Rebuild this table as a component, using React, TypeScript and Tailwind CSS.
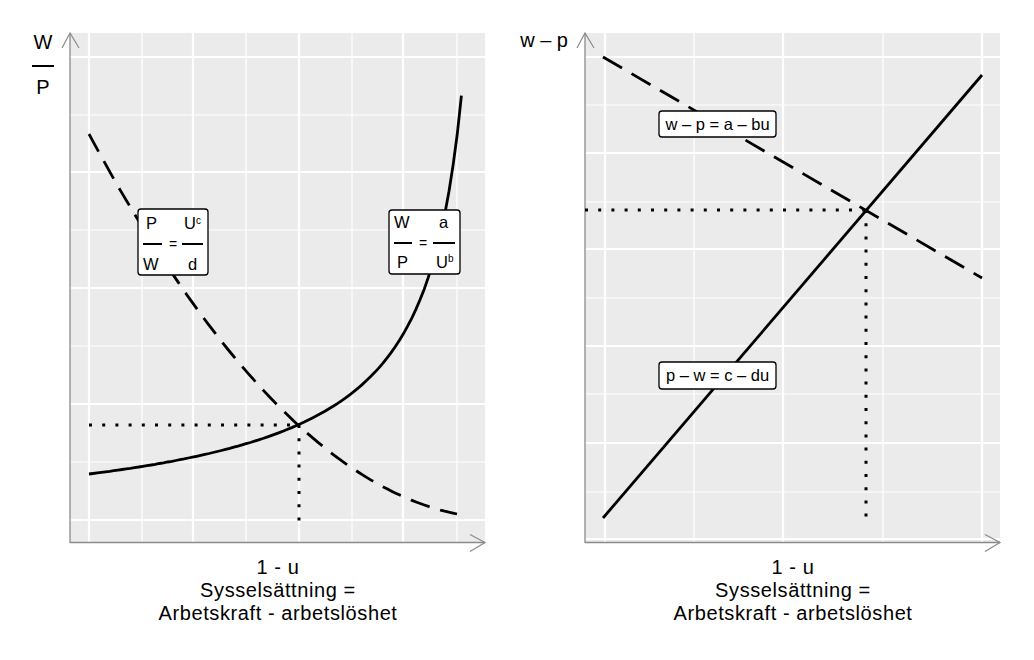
const FONT = "'Liberation Sans', Arial, sans-serif";

type GridProps = {
  x0: number;
  x1: number;
  y0: number;
  y1: number;
  vMajor: number[];
  vMinor: number[];
  hMajor: number[];
  hMinor: number[];
};

// ggplot-style panel: grey background with white major/minor grid lines
function Panel({ x0, x1, y0, y1, vMajor, vMinor, hMajor, hMinor }: GridProps) {
  return (
    <g>
      <rect x={x0} y={y0} width={x1 - x0} height={y1 - y0} fill="#EBEBEB" />
      {hMinor.map((y) => (
        <line key={'hm' + y} x1={x0} x2={x1} y1={y} y2={y} stroke="#fff" strokeWidth="1.2" />
      ))}
      {vMinor.map((x) => (
        <line key={'vm' + x} x1={x} x2={x} y1={y0} y2={y1} stroke="#fff" strokeWidth="1.2" />
      ))}
      {hMajor.map((y) => (
        <line key={'hM' + y} x1={x0} x2={x1} y1={y} y2={y} stroke="#fff" strokeWidth="2.2" />
      ))}
      {vMajor.map((x) => (
        <line key={'vM' + x} x1={x} x2={x} y1={y0} y2={y1} stroke="#fff" strokeWidth="2.2" />
      ))}
      {/* axes with open arrow heads */}
      <line x1={x0} x2={x0} y1={y0} y2={y1} stroke="#8a8a8a" strokeWidth="1.3" />
      <line x1={x0} x2={x1} y1={y1 - 0.5} y2={y1 - 0.5} stroke="#8a8a8a" strokeWidth="1.3" />
      <polyline
        points={`${x0 - 8},${y0 + 15} ${x0},${y0} ${x0 + 9},${y0 + 15}`}
        fill="none"
        stroke="#8a8a8a"
        strokeWidth="1.2"
      />
      <polyline
        points={`${x1 - 15},${y1 - 8.5} ${x1},${y1 - 0.5} ${x1 - 15},${y1 + 8.5}`}
        fill="none"
        stroke="#8a8a8a"
        strokeWidth="1.2"
      />
    </g>
  );
}

function buildPath(n: number, f: (i: number) => [number, number]) {
  const pts: string[] = [];
  for (let i = 0; i <= n; i++) {
    const [x, y] = f(i / n);
    pts.push(`${x.toFixed(1)},${y.toFixed(1)}`);
  }
  return 'M ' + pts.join(' L ');
}

// W/P = a / U^b  (rising)
const solidPath = buildPath(90, (s) => {
  const t = s * 1.012;
  const h = 69 * Math.pow(1.1 / (1.1 - t), 0.74);
  return [89 + t * 368, 543 - h];
});

// P/W = U^c / d  (falling)
const dashedPath = buildPath(90, (t) => {
  const h = 409 - 686 * t + 306 * t * t;
  return [89 + t * 368, 543 - h];
});

function LeftChart() {
  return (
    <svg width="517" height="556" viewBox="0 0 517 556" xmlns="http://www.w3.org/2000/svg">
      <Panel
        x0={70}
        x1={485}
        y0={33}
        y1={543}
        vMajor={[89, 193, 299, 403]}
        vMinor={[142, 246, 352, 457]}
        hMajor={[57, 172, 288, 404, 520]}
        hMinor={[115, 230, 346, 462]}
      />

      {/* y label W / P */}
      <text x="43" y="49" fontSize="20" fontFamily={FONT} textAnchor="middle" fill="#000">
        W
      </text>
      <line x1="32" x2="54" y1="66" y2="66" stroke="#000" strokeWidth="2" />
      <text x="43" y="94" fontSize="20" fontFamily={FONT} textAnchor="middle" fill="#000">
        P
      </text>

      {/* equilibrium guides */}
      <line x1="89" x2="299" y1="425" y2="425" stroke="#000" strokeWidth="3" strokeDasharray="3 10.2" />
      <line x1="299" x2="299" y1="425" y2="521" stroke="#000" strokeWidth="3" strokeDasharray="3 10.2" />

      <path d={dashedPath} fill="none" stroke="#000" strokeWidth="2.8" strokeDasharray="20 11" />
      <path d={solidPath} fill="none" stroke="#000" strokeWidth="2.8" />

      {/* P/W = U^c/d */}
      <g fontFamily={FONT} fill="#000">
        <rect x="138" y="209" width="70" height="66" rx="3" fill="#fff" stroke="#000" strokeWidth="1.3" />
        <text x="146" y="229" fontSize="16.5">P</text>
        <text x="184" y="229" fontSize="16.5">U</text>
        <text x="196" y="224" fontSize="10">c</text>
        <line x1="143" x2="162" y1="244" y2="244" stroke="#000" strokeWidth="2" />
        <text x="173" y="249" fontSize="14" textAnchor="middle">=</text>
        <line x1="182" x2="203" y1="244" y2="244" stroke="#000" strokeWidth="2" />
        <text x="143" y="270" fontSize="16.5">W</text>
        <text x="188" y="270" fontSize="16.5">d</text>
      </g>

      {/* W/P = a/U^b */}
      <g fontFamily={FONT} fill="#000">
        <rect x="389" y="210" width="71" height="64" rx="3" fill="#fff" stroke="#000" strokeWidth="1.3" />
        <text x="394" y="228" fontSize="16.5">W</text>
        <text x="439" y="228" fontSize="16.5">a</text>
        <line x1="394" x2="412" y1="243" y2="243" stroke="#000" strokeWidth="2" />
        <text x="423" y="248" fontSize="14" textAnchor="middle">=</text>
        <line x1="433" x2="455" y1="243" y2="243" stroke="#000" strokeWidth="2" />
        <text x="397" y="268" fontSize="16.5">P</text>
        <text x="436" y="268" fontSize="16.5">U</text>
        <text x="448" y="262" fontSize="10">b</text>
      </g>
    </svg>
  );
}

function RightChart() {
  return (
    <svg width="517" height="556" viewBox="517 0 517 556" xmlns="http://www.w3.org/2000/svg">
      <Panel
        x0={585}
        x1={1000}
        y0={33}
        y1={543}
        vMajor={[605, 783, 982]}
        vMinor={[694, 883]}
        hMajor={[57, 153, 249, 346, 443, 539]}
        hMinor={[105, 202, 298, 394, 492]}
      />

      <text x="568" y="47" fontSize="20" fontFamily={FONT} textAnchor="end" fill="#000">
        w – p
      </text>

      <line x1="585" x2="866" y1="210" y2="210" stroke="#000" strokeWidth="3" strokeDasharray="3 10.2" />
      <line x1="866" x2="866" y1="210" y2="521" stroke="#000" strokeWidth="3" strokeDasharray="3 10.2" />

      <line x1="603" y1="57" x2="982" y2="278" stroke="#000" strokeWidth="2.8" strokeDasharray="22 11" />
      <line x1="603" y1="518" x2="982" y2="75" stroke="#000" strokeWidth="2.8" />

      <g fontFamily={FONT} fill="#000">
        <rect x="659" y="111" width="117" height="26" rx="3" fill="#fff" stroke="#000" strokeWidth="1.3" />
        <text x="717.5" y="130" fontSize="16.5" textAnchor="middle">
          w – p = a – bu
        </text>
        <rect x="659" y="362" width="117" height="27" rx="3" fill="#fff" stroke="#000" strokeWidth="1.3" />
        <text x="717.5" y="381" fontSize="16.5" textAnchor="middle">
          p – w = c – du
        </text>
      </g>
    </svg>
  );
}

function AxisCaption({ pad }: { pad: string }) {
  return (
    <div
      className={`${pad} flex flex-col items-center font-['Liberation_Sans',Arial,sans-serif] text-[20px] leading-[23px] tracking-[0.6px] text-black`}
    >
      <span>1 - u</span>
      <span>Sysselsättning =</span>
      <span>Arbetskraft - arbetslöshet</span>
    </div>
  );
}

export default function App() {
  return (
    <div className="flex w-[1034px] h-[660px] bg-white overflow-hidden">
      <div className="flex flex-col w-[517px]">
        <LeftChart />
        <AxisCaption pad="pl-[39px]" />
      </div>
      <div className="flex flex-col w-[517px]">
        <RightChart />
        <AxisCaption pad="pl-[35px]" />
      </div>
    </div>
  );
}
